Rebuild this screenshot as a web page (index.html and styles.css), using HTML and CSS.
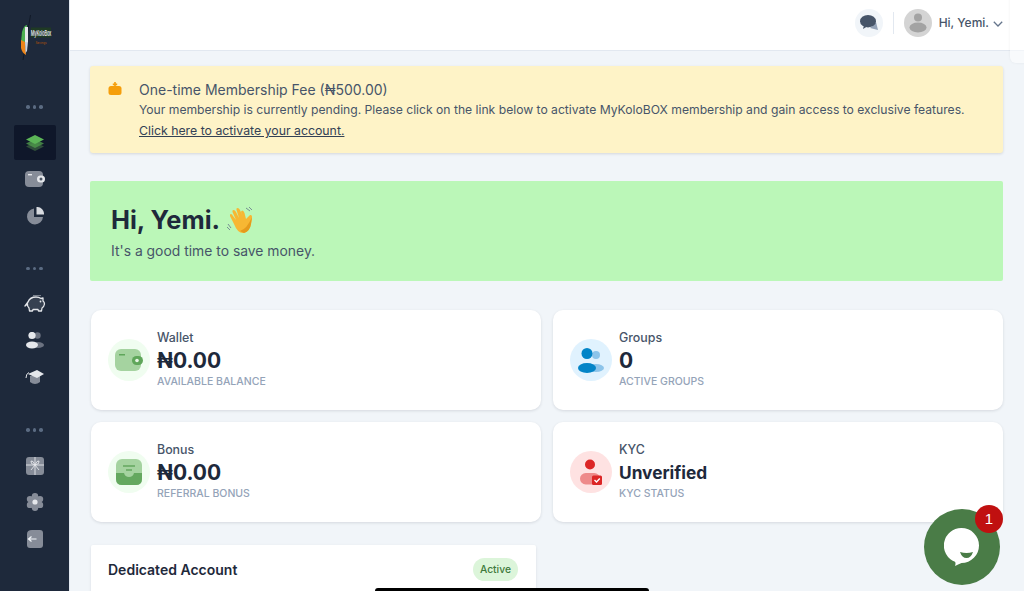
FILE: index.html
```html
<!DOCTYPE html>
<html lang="en">
<head>
  <meta charset="UTF-8">
  <meta name="viewport" content="width=device-width, initial-scale=1.0">
  <title>MyKoloBOX Dashboard</title>
  <link rel="stylesheet" href="styles.css">
</head>
<body>
  <div class="layout">
    <!-- Sidebar -->
    <aside class="sidebar">
      <div class="logo">
        <svg width="12" height="45" viewBox="0 0 12 45">
          <path d="M10.5 0 L3 45" stroke="#111827" stroke-width="1"/>
          <path d="M2 17 Q4 10 7 10 L6 27 L1 27 Z" fill="#4caf50"/>
          <path d="M5 12 L8 12 L8 27 L5 27 Z" fill="#e5e7eb"/>
          <path d="M1 25 L5 27 L6 40 Q2 38 1 33 Z" fill="#ee8418"/>
          <path d="M5 27 L8 27 L7 36 L5.5 38 Z" fill="#cbd5e1"/>
        </svg>
        <div class="logo-text">
          <span class="logo-name">MyKoloBox</span>
          <span class="logo-tag">Savings</span>
        </div>
      </div>

      <div class="dots"><i></i><i></i><i></i></div>
      <nav class="nav">
        <a class="nav-item active">
          <svg width="20" height="18" viewBox="0 0 20 18">
            <path d="M10 8 L19 12.5 L10 17 L1 12.5 Z" fill="#4a7c47" opacity=".55"/>
            <path d="M10 5 L19 9.5 L10 14 L1 9.5 Z" fill="#4f9a4b" opacity=".8"/>
            <path d="M10 1 L19 5.5 L10 10 L1 5.5 Z" fill="#5cb557"/>
          </svg>
        </a>
        <a class="nav-item">
          <svg width="20" height="16" viewBox="0 0 20 16">
            <rect x="0" y="0" width="18" height="16" rx="4" fill="#868c98"/>
            <rect x="3" y="3" width="4" height="1.4" fill="#e5e7eb"/>
            <rect x="12" y="4.5" width="8" height="7" rx="3.5" fill="#e5e7eb"/>
            <circle cx="16" cy="8" r="1.5" fill="#4b5563"/>
          </svg>
        </a>
        <a class="nav-item">
          <svg width="18" height="18" viewBox="0 0 18 18">
            <path d="M8 1.5 A8 8 0 1 0 17 10 L8 10 Z" fill="#868c98"/>
            <path d="M10.5 0 A7 7 0 0 1 18 7.5 L10.5 7.5 Z" fill="#d8dbe0"/>
          </svg>
        </a>
      </nav>

      <div class="dots"><i></i><i></i><i></i></div>
      <nav class="nav">
        <a class="nav-item">
          <svg width="22" height="18" viewBox="0 0 22 18">
            <path d="M4 7 Q6 2 12 2 Q15 2 17 3.5 L19 3 L19 6 Q20.5 7 20.5 9 Q20 12 18 13 L17.5 16 L14.5 16 L14 14.5 L9 14.5 L8.5 16 L5.5 16 L5 13 Q3 11 3.5 9 L1 11 Z" fill="#374151" stroke="#e5e7eb" stroke-width="1.3" stroke-linejoin="round"/>
            <path d="M9 0.6 L17 0.6" stroke="#868c98" stroke-width="1"/>
            <circle cx="16.5" cy="6.5" r=".9" fill="#e5e7eb"/>
          </svg>
        </a>
        <a class="nav-item">
          <svg width="18" height="18" viewBox="0 0 18 18">
            <circle cx="11.5" cy="3.5" r="3.2" fill="#6b7280"/>
            <ellipse cx="12" cy="13" rx="6" ry="3" fill="#6b7280"/>
            <circle cx="6" cy="3.5" r="3.6" fill="#e5e7eb"/>
            <ellipse cx="6" cy="13" rx="6" ry="3.4" fill="#e5e7eb"/>
          </svg>
        </a>
        <a class="nav-item">
          <svg width="20" height="16" viewBox="0 0 20 16">
            <path d="M5 7 L5 13 Q10 17 15 13 L15 7 Z" fill="#868c98"/>
            <path d="M3 5 L12 1 L19 5 L12 9 Z" fill="#e5e7eb"/>
            <path d="M4 3.5 Q1 4.5 1 9" fill="none" stroke="#e5e7eb" stroke-width="1"/>
          </svg>
        </a>
      </nav>

      <div class="dots"><i></i><i></i><i></i></div>
      <nav class="nav">
        <a class="nav-item">
          <svg width="18" height="18" viewBox="0 0 18 18">
            <rect width="18" height="18" rx="3" fill="#868c98"/>
            <path d="M9 0 V18 M0 8 H18" stroke="#e5e7eb" stroke-width=".9"/>
            <path d="M9 8 Q4 7 5 4 Q7 3 9 8 Q14 7 13 4 Q11 3 9 8 L5 13 M9 8 L13 13" fill="none" stroke="#e5e7eb" stroke-width=".9"/>
          </svg>
        </a>
        <a class="nav-item">
          <svg width="18" height="18" viewBox="0 0 18 18" fill="#868c98">
            <circle cx="9" cy="9" r="6.5"/>
            <circle cx="9" cy="3.2" r="3.2"/>
            <circle cx="9" cy="14.8" r="3.2"/>
            <circle cx="4" cy="6.1" r="3.2"/>
            <circle cx="14" cy="6.1" r="3.2"/>
            <circle cx="4" cy="11.9" r="3.2"/>
            <circle cx="14" cy="11.9" r="3.2"/>
            <circle cx="9" cy="9" r="2.6" fill="#e5e7eb"/>
          </svg>
        </a>
        <a class="nav-item">
          <svg width="16" height="18" viewBox="0 0 16 18">
            <path d="M5 0 H13 Q16 0 16 3 V15 Q16 18 13 18 H3 Q0 18 0 15 V4 Q0 0 5 0 Z" fill="#868c98"/>
            <path d="M9.5 9 H1.5 M4.5 6.5 L1.5 9 L4.5 11.5" fill="none" stroke="#f1f5f9" stroke-width="1.2"/>
          </svg>
        </a>
      </nav>
    </aside>

    <div class="content">
      <!-- Top bar -->
      <header class="topbar">
        <span class="chat-btn">
          <svg width="18" height="16" viewBox="0 0 18 16">
            <path d="M16 7 L18 15 L10 13 Z" fill="#94a3b8"/>
            <ellipse cx="8" cy="6.2" rx="8" ry="6.2" fill="#475569"/>
            <path d="M4 10 L3 14 L8 11 Z" fill="#475569"/>
          </svg>
        </span>
        <span class="divider"></span>
        <span class="avatar">
          <svg width="28" height="28" viewBox="0 0 28 28">
            <circle cx="14" cy="14" r="14" fill="#d4d4d4"/>
            <circle cx="14" cy="8.5" r="4" fill="#a3a3a3"/>
            <ellipse cx="14" cy="18.5" rx="8.5" ry="5" fill="#a3a3a3"/>
          </svg>
        </span>
        <span class="user-name">Hi, Yemi.</span>
        <svg class="caret" width="10" height="6" viewBox="0 0 10 6">
          <path d="M.8 .8 L5 5 L9.2 .8" fill="none" stroke="#64748b" stroke-width="1.3"/>
        </svg>
      </header>

      <main class="main">
        <!-- Membership notice -->
        <section class="notice">
          <svg class="notice-icon" width="14" height="13" viewBox="0 0 14 13">
            <rect x="0.5" y="4" width="13" height="9" rx="2.5" fill="#f59e0b"/>
            <path d="M7 0 V5 M4.8 2.4 H9.2" stroke="#f59e0b" stroke-width="1.6"/>
          </svg>
          <div>
            <h4 class="notice-title">One-time Membership Fee (₦500.00)</h4>
            <p class="notice-text">Your membership is currently pending. Please click on the link below to activate MyKoloBOX membership and gain access to exclusive features.</p>
            <a class="notice-link">Click here to activate your account.</a>
          </div>
        </section>

        <!-- Greeting -->
        <section class="hero">
          <h1 class="hero-title">Hi, Yemi.
            <svg width="28" height="27" viewBox="0 0 28 27">
              <path d="M7 17 L3 9 Q2.5 7 4 7 Q5 7 6 9 L9 13 L5.5 5 Q5 3 6.5 3 Q8 3 9 5 L12 11 L9.5 3 Q9 1 10.5 1 Q12 1 13 3 L16 10 L14 5 Q14 3.5 15.5 3.5 Q17 4 17.5 6 L19 12 Q21 10 23 8 Q25 7.5 25 9.5 Q25 12 24 17 Q23 24 17 26 Q11 27 7 17 Z" fill="#f7b733"/>
              <path d="M17 26 Q23 24 24 17 L25 10 Q20 22 13 24 Z" fill="#e59a1c"/>
              <path d="M1 17 L4 21 M0 20 L3 23 M19 1 L23 4 M22 0 L25 3" stroke="#64748b" stroke-width=".8"/>
            </svg>
          </h1>
          <p class="hero-sub">It's a good time to save money.</p>
        </section>

        <!-- Stat cards -->
        <section class="stats">
          <div class="stat-card">
            <span class="stat-icon green">
              <svg width="28" height="22" viewBox="0 0 28 22">
                <rect width="26" height="22" rx="6" fill="#a5d3a0"/>
                <rect x="4" y="5" width="6" height="1.5" fill="#5fa65a"/>
                <rect x="17" y="7" width="11" height="9" rx="4.5" fill="#5fa65a"/>
                <circle cx="22" cy="11.5" r="1.8" fill="#e8f5e6"/>
              </svg>
            </span>
            <div class="stat-body">
              <span class="stat-label">Wallet</span>
              <span class="stat-value">₦0.00</span>
              <span class="stat-sub">AVAILABLE BALANCE</span>
            </div>
          </div>

          <div class="stat-card">
            <span class="stat-icon blue">
              <svg width="26" height="25" viewBox="0 0 26 25">
                <circle cx="18" cy="7" r="4" fill="#8cc4ea"/>
                <ellipse cx="18" cy="20" rx="8" ry="4" fill="#8cc4ea"/>
                <circle cx="9" cy="5.5" r="5.5" fill="#0284c7"/>
                <ellipse cx="9" cy="20" rx="9" ry="5" fill="#0284c7"/>
              </svg>
            </span>
            <div class="stat-body">
              <span class="stat-label">Groups</span>
              <span class="stat-value">0</span>
              <span class="stat-sub">ACTIVE GROUPS</span>
            </div>
          </div>

          <div class="stat-card">
            <span class="stat-icon green">
              <svg width="26" height="26" viewBox="0 0 26 26">
                <rect width="26" height="26" rx="6" fill="#a5d3a0"/>
                <path d="M0 14 H8 Q9 18 13 18 Q17 18 18 14 H26 V20 Q26 26 20 26 H6 Q0 26 0 20 Z" fill="#64a85f"/>
                <path d="M7 7 H19 M10 11 H16" stroke="#64a85f" stroke-width="1.5"/>
              </svg>
            </span>
            <div class="stat-body">
              <span class="stat-label">Bonus</span>
              <span class="stat-value">₦0.00</span>
              <span class="stat-sub">REFERRAL BONUS</span>
            </div>
          </div>

          <div class="stat-card">
            <span class="stat-icon red">
              <svg width="22" height="26" viewBox="0 0 22 26">
                <circle cx="10" cy="5.5" r="5" fill="#dc2626"/>
                <rect x="0" y="14" width="20" height="11.5" rx="5.75" fill="#ee8a8a"/>
                <rect x="12" y="16.5" width="10" height="9.5" rx="1.5" fill="#dc2626"/>
                <path d="M14.5 21 L16.5 23 L19.8 19.5" fill="none" stroke="#fff" stroke-width="1.4"/>
              </svg>
            </span>
            <div class="stat-body">
              <span class="stat-label">KYC</span>
              <span class="stat-value small">Unverified</span>
              <span class="stat-sub">KYC STATUS</span>
            </div>
          </div>
        </section>

        <!-- Dedicated account -->
        <section class="account-card">
          <h3 class="account-title">Dedicated Account</h3>
          <span class="badge">Active</span>
        </section>
      </main>
    </div>
  </div>

  <!-- Overlays -->
  <div class="side-tab"></div>
  <div class="chat-widget">
    <svg width="36" height="38" viewBox="0 0 36 38">
      <path d="M17.5 0 A17.5 17.5 0 0 1 17.5 35 Q15 36 11 38 Q12 35 11 33.8 A17.5 17.5 0 0 1 17.5 0 Z" fill="#fff"/>
      <path d="M16 24 Q22.5 26 29 24 Q27 30 22.5 30 Q18 30 16 24 Z" fill="#4a7c47"/>
    </svg>
    <span class="chat-count">1</span>
  </div>
  <div class="home-bar"></div>
</body>
</html>
```

FILE: styles.css
```css
* {
  box-sizing: border-box;
}

html, body {
  height: 100%;
}

body {
  margin: 0;
  overflow: hidden;
  font-family: Inter, "Liberation Sans", sans-serif;
  background-color: #f1f5f9;
  color: #1e293b;
}

.layout {
  display: flex;
  height: 591px;
  overflow: hidden;
}

/* Sidebar */
.sidebar {
  flex: 0 0 70px;
  background-color: #1e293b;
  border-right: 1px solid #e2e8f0;
  display: flex;
  flex-direction: column;
  align-items: center;
  padding-top: 15px;
}

.logo {
  display: flex;
  align-items: center;
  gap: 1px;
  height: 45px;
  margin-bottom: 42px;
}

.logo-text {
  display: flex;
  flex-direction: column;
  align-items: center;
  width: 17px;
  gap: 6px;
}

.logo-name {
  font-size: 4px;
  font-weight: 700;
  letter-spacing: -0.2px;
  color: #d1d5db;
  background-color: #1f3a24;
  white-space: nowrap;
  transform: scaleY(2);
}

.logo-tag {
  font-size: 3px;
  color: #b45309;
}

.dots {
  display: flex;
  gap: 3px;
  height: 10px;
  align-items: center;
  flex: none;
}

.dots i {
  width: 3.5px;
  height: 3.5px;
  border-radius: 50%;
  background-color: #5b6b82;
}

.nav {
  display: flex;
  flex-direction: column;
  gap: 1.5px;
  margin: 13px 0 30.5px;
}

.nav-item {
  display: flex;
  align-items: center;
  justify-content: center;
  width: 42px;
  height: 35px;
  border-radius: 2px;
}

.nav-item.active {
  background-color: #0f172a;
}

/* Top bar */
.content {
  flex: 1;
  min-width: 0;
}

.topbar {
  display: flex;
  align-items: center;
  justify-content: flex-end;
  height: 51px;
  padding: 0 21px 5px 0;
  background-color: #fff;
  border-bottom: 1px solid #e2e8f0;
}

.chat-btn {
  display: flex;
  align-items: center;
  justify-content: center;
  width: 28px;
  height: 28px;
  border-radius: 50%;
  background-color: #f1f5f9;
}

.divider {
  width: 1px;
  height: 22px;
  margin: 0 10px;
  background-color: #e2e8f0;
}

.avatar {
  display: flex;
  margin-right: 7px;
}

.user-name {
  font-size: 12px;
  font-weight: 500;
  color: #475569;
}

.caret {
  margin: 2px 0 0 4px;
}

/* Main */
.main {
  padding: 15px 21px 0 20px;
}

.notice {
  display: flex;
  gap: 17px;
  height: 87px;
  padding: 15px 18px;
  background-color: #fef3c7;
  border-radius: 3px;
  box-shadow: 0 1px 3px rgba(0, 0, 0, 0.12);
}

.notice-icon {
  margin-top: 1px;
  flex: none;
}

.notice-title {
  margin: 0;
  font-size: 14px;
  font-weight: 400;
  line-height: 18px;
  color: #475569;
}

.notice-text {
  margin: 2px 0 0;
  font-size: 12.15px;
  line-height: 18px;
  color: #475569;
}

.notice-link {
  display: inline-block;
  margin-top: 3px;
  font-size: 12.3px;
  line-height: 16px;
  color: #334155;
  text-decoration: underline;
}

.hero {
  height: 100px;
  margin-top: 28px;
  padding: 23px 21px;
  background-color: #bbf7b8;
  border-radius: 2px;
}

.hero-title {
  display: flex;
  align-items: center;
  gap: 7px;
  margin: 0;
  font-size: 25.4px;
  font-weight: 700;
  line-height: 32px;
  color: #1e293b;
}

.hero-sub {
  margin: 5px 0 0;
  font-size: 13.9px;
  line-height: 20px;
  color: #475569;
}

/* Stat cards */
.stats {
  display: grid;
  grid-template-columns: 1fr 1fr;
  gap: 12px;
  margin-top: 29px;
  padding: 0 0 0 1px;
}

.stat-card {
  display: flex;
  align-items: center;
  gap: 7px;
  height: 100px;
  padding: 0 17px;
  background-color: #fff;
  border-radius: 10px;
  box-shadow: 0 1px 3px rgba(15, 23, 42, 0.12);
}

.stat-icon {
  display: flex;
  align-items: center;
  justify-content: center;
  flex: none;
  width: 42px;
  height: 42px;
  border-radius: 50%;
}

.stat-icon.green {
  background-color: #f0fdf0;
}

.stat-icon.blue {
  background-color: #e0f2fe;
}

.stat-icon.red {
  background-color: #fee2e2;
}

.stat-body {
  display: flex;
  flex-direction: column;
  padding-bottom: 1px;
}

.stat-label {
  font-size: 12.4px;
  font-weight: 500;
  line-height: 16px;
  color: #475569;
}

.stat-value {
  margin-top: 1px;
  font-size: 21px;
  font-weight: 700;
  line-height: 28px;
  color: #1e293b;
}

.stat-value.small {
  font-size: 17.3px;
}

.stat-sub {
  font-size: 10.5px;
  font-weight: 500;
  line-height: 14px;
  color: #94a3b8;
}

/* Dedicated account */
.account-card {
  display: flex;
  align-items: flex-start;
  justify-content: space-between;
  width: 445px;
  height: 100px;
  margin: 23px 0 0 1px;
  padding: 13px 18px 0 17px;
  background-color: #fff;
  border-radius: 2px;
  box-shadow: 0 1px 3px rgba(15, 23, 42, 0.1);
}

.account-title {
  margin: 0;
  font-size: 14px;
  font-weight: 600;
  line-height: 23px;
  color: #1e293b;
}

.badge {
  padding: 4px 7px;
  font-size: 10.3px;
  font-weight: 500;
  line-height: 15px;
  color: #3f7a3c;
  background-color: #dcf5da;
  border-radius: 12px;
}

/* Overlays */
.side-tab {
  position: absolute;
  top: -10px;
  right: -20px;
  width: 34px;
  height: 73px;
  background-color: rgba(255, 255, 255, 0.5);
  border-radius: 6px;
  box-shadow: 0 0 3px rgba(15, 23, 42, 0.06);
}

.chat-widget {
  position: absolute;
  top: 509px;
  left: 924px;
  display: flex;
  align-items: center;
  justify-content: center;
  width: 76px;
  height: 76px;
  border-radius: 50%;
  background-color: #4a7c47;
}

.chat-count {
  position: absolute;
  top: -4px;
  right: -3px;
  width: 28px;
  height: 28px;
  font-family: "Liberation Sans", sans-serif;
  font-size: 15px;
  line-height: 28px;
  text-align: center;
  color: #fff;
  background-color: #c01010;
  border-radius: 50%;
}

.home-bar {
  position: absolute;
  left: 375px;
  bottom: 0;
  width: 274px;
  height: 3px;
  background-color: #000;
  border-radius: 3px 3px 0 0;
}
```
